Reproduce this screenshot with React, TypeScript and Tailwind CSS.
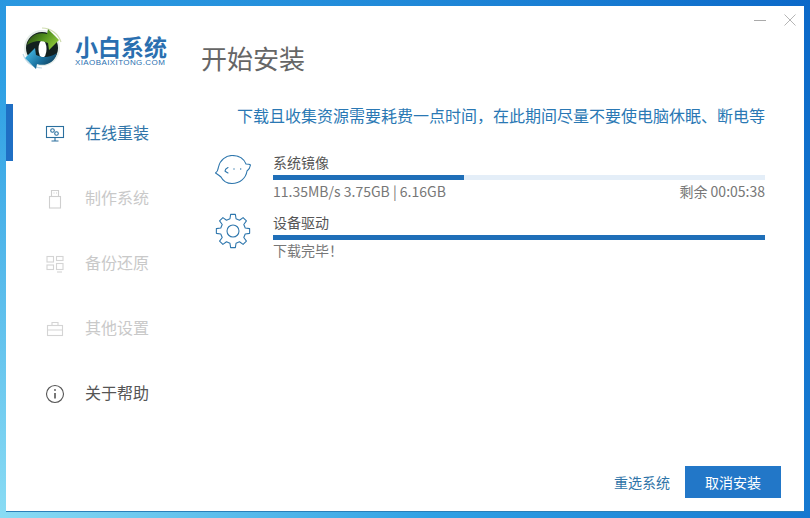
import React from 'react';

const Logo = () => (
  <svg width="44" height="46" viewBox="0 0 44 46">
    <defs>
      <linearGradient id="top" x1="0" y1="0" x2="1" y2="0.6">
        <stop offset="0" stopColor="#1c3012" />
        <stop offset="0.55" stopColor="#4f8f1c" />
        <stop offset="1" stopColor="#8cc63a" />
      </linearGradient>
      <linearGradient id="bottom" x1="0" y1="0" x2="1" y2="0.6">
        <stop offset="0" stopColor="#0c2a3c" />
        <stop offset="0.55" stopColor="#1a6f9c" />
        <stop offset="1" stopColor="#3fb0dc" />
      </linearGradient>
    </defs>
    <path d="M20 2 A20 20 0 0 1 39 16" fill="none" stroke="#cfdcb0" strokeWidth="1.2" />
    <path d="M1 28 A20 20 0 0 0 20 42" fill="none" stroke="#c4dbe6" strokeWidth="1.2" />
    <circle cx="20" cy="22" r="18" fill="#e4ece8" />
    <circle cx="20" cy="22" r="16" fill="#12201f" />
    <ellipse cx="20.5" cy="23" rx="4" ry="9" fill="#ffffff" />
    <path d="M5 19 C7 10 16 5 25 8 L26 3 L37 14 L27 24 L26 17 C20 14 12 14 5 19 Z" fill="url(#top)" />
    <path d="M5 19 C7 10 16 5 25 8 L26 3 L37 14 L27 24 L26 17 C20 14 12 14 5 19 Z" fill="url(#bottom)" transform="rotate(180 20 23)" />
  </svg>
);

const MonitorIcon = () => (
  <svg width="20" height="18" viewBox="0 0 20 18" fill="none" stroke="#2a6f9e" strokeWidth="1.1">
    <rect x="1.5" y="1.5" width="17" height="11" />
    <circle cx="7.5" cy="5.5" r="1.8" />
    <circle cx="11.5" cy="8.5" r="1.8" />
    <path d="M10 12.5V16M6.5 16h7" />
  </svg>
);

const UsbIcon = () => (
  <svg width="14" height="20" viewBox="0 0 14 20" fill="none" stroke="#cfcfcf" strokeWidth="1.1">
    <rect x="1.5" y="7.5" width="11" height="11.5" />
    <path d="M3.5 7.5V1.5h7v6M5.5 4h1M8 4h1" />
  </svg>
);

const BackupIcon = () => (
  <svg width="18" height="18" viewBox="0 0 18 18" fill="none" stroke="#d4d4d4" strokeWidth="1.1">
    <rect x="1" y="1.5" width="6.5" height="5.5" />
    <rect x="10.5" y="1.5" width="6.5" height="4" />
    <rect x="1" y="10" width="6.5" height="4.5" />
    <rect x="10.5" y="8.5" width="6.5" height="6" />
    <path d="M11 17h5" />
  </svg>
);

const CaseIcon = () => (
  <svg width="18" height="16" viewBox="0 0 18 16" fill="none" stroke="#d4d4d4" strokeWidth="1.1">
    <rect x="1.5" y="4.5" width="15" height="10" />
    <path d="M6 4.5V1.5h6v3M1.5 9h15" />
  </svg>
);

const InfoIcon = () => (
  <svg width="20" height="20" viewBox="0 0 20 20" fill="none" stroke="#555555" strokeWidth="1.1">
    <circle cx="10" cy="10" r="8.5" />
    <path d="M10 9v5.5" strokeWidth="1.6" />
    <circle cx="10" cy="6" r="0.9" fill="#555555" stroke="none" />
  </svg>
);

const ChatIcon = () => (
  <svg width="37" height="30" viewBox="0 0 37 30" fill="none" stroke="#2f77ad" strokeWidth="1.1">
    <path d="M3.5 12 C5 5 11 0.5 17 0.5 C24 0.5 29 4 31 9 C33 9 34.5 9 35.5 10 C35 13 33.5 15 32 16 C31 23 25 28.5 17 28.5 C12 28.5 8 26 6 22 C4 20 2 19 0.5 18 C2 17 3 15 3.5 12 Z" />
    <path d="M13 12.5 C11 13.5 10 15 10 16 C11 17 12 17.5 13 18" strokeLinecap="round" />
    <circle cx="19" cy="14" r="0.7" fill="#2f77ad" stroke="none" />
    <circle cx="25.7" cy="14" r="0.7" fill="#2f77ad" stroke="none" />
  </svg>
);

// 8 tooth gear outline around the middle of the 36x36 box
const gearPoints = () => {
  const pts: string[] = [];
  for (let i = 0; i < 8; i++) {
    const a = (i * Math.PI) / 4 - Math.PI / 2;
    const step = Math.PI / 8;
    const list: [number, number][] = [
      [12.6, a - step * 0.62],
      [16.8, a - step * 0.36],
      [16.8, a + step * 0.36],
      [12.6, a + step * 0.62],
    ];
    list.forEach(([r, t]) => pts.push(`${(18 + r * Math.cos(t)).toFixed(2)},${(18 + r * Math.sin(t)).toFixed(2)}`));
  }
  return pts.join(' ');
};

const GearIcon = () => (
  <svg width="36" height="36" viewBox="0 0 36 36" fill="none" stroke="#2f77ad" strokeWidth="1.1">
    <polygon points={gearPoints()} strokeLinejoin="round" />
    <circle cx="18" cy="18" r="6" />
  </svg>
);

const menu = [
  { icon: MonitorIcon, label: '在线重装', color: 'text-[#2f74a8]', active: true },
  { icon: UsbIcon, label: '制作系统', color: 'text-[#c9c9c9]', active: false },
  { icon: BackupIcon, label: '备份还原', color: 'text-[#c9c9c9]', active: false },
  { icon: CaseIcon, label: '其他设置', color: 'text-[#c9c9c9]', active: false },
  { icon: InfoIcon, label: '关于帮助', color: 'text-[#555555]', active: false },
];

const App: React.FC = () => {
  return (
    <div
      className="w-[810px] h-[518px] p-[6px] overflow-hidden bg-[radial-gradient(circle_at_0%_100%,#8adcf4_0%,#2fa0e4_45%,#0b68c8_100%)]"
      style={{ fontFamily: '"Noto Sans CJK SC", "Noto Sans", sans-serif' }}
    >
      <div className="relative w-full h-full bg-white flex flex-col border-b border-[#2a7fb8]">
        {/* window buttons */}
        <div className="absolute top-[8px] right-[8px] flex items-center gap-[18px]">
          <div className="w-[12px] h-px bg-[#aaaaaa]" />
          <svg width="12" height="12" viewBox="0 0 12 12" stroke="#b5b5b5" strokeWidth="1">
            <path d="M0.5 0.5l11 11M11.5 0.5l-11 11" />
          </svg>
        </div>

        {/* header */}
        <div className="h-[95px] flex items-start shrink-0">
          <div className="w-[195px] pl-[16px] pt-[20px] flex items-start">
            <Logo />
            <div className="ml-[9px] mt-[8px] flex flex-col">
              <span className="text-[23px] leading-[24px] font-bold text-[#2a6fb0] whitespace-nowrap">小白系统</span>
              <span className="text-[8px] leading-[10px] text-[#2a6fb0] tracking-[0.4px] whitespace-nowrap" style={{ fontFamily: '"Liberation Sans", sans-serif' }}>XIAOBAIXITONG.COM</span>
            </div>
          </div>
          <h1 className="text-[26px] leading-[30px] mt-[37px] font-normal text-[#666666]">开始安装</h1>
        </div>

        <div className="flex-1 flex min-h-0">
          {/* sidebar */}
          <div className="w-[196px] shrink-0 flex flex-col">
            {menu.map((item) => (
              <div key={item.label} className="relative h-[65px] flex items-center">
                {item.active && <div className="absolute left-0 top-[3px] h-[57px] w-[7px] bg-[#1f6fc4]" />}
                <div className="w-[79px] pl-[29px] pr-[10px] flex justify-center">
                  <item.icon />
                </div>
                <span className={`text-[16px] mb-[4px] ${item.color}`}>{item.label}</span>
              </div>
            ))}
          </div>

          {/* main */}
          <div className="flex-1 flex flex-col pr-[23px] pb-[13px] min-w-0">
            <div className="flex-1 pr-[16px] pl-[13px]">
              <p className="text-[16px] leading-[22px] mt-[3px] text-right text-[#2a78b4] whitespace-nowrap">下载且收集资源需要耗费一点时间，在此期间尽量不要使电脑休眠、断电等</p>

              <div className="flex mt-[28px]">
                <div className="w-[58px] shrink-0 pt-[1px]"><ChatIcon /></div>
                <div className="flex-1">
                  <div className="text-[14px] leading-[16px] text-[#555555]">系统镜像</div>
                  <div className="h-[5px] mt-[5px] bg-[#e4eef8]">
                    <div className="h-full bg-[#1f6fb8]" style={{ width: '38.8%' }} />
                  </div>
                  <div className="flex justify-between text-[14px] leading-[18px] mt-[2px] text-[#777777]">
                    <span>11.35MB/s 3.75GB | 6.16GB</span>
                    <span>剩余 00:05:38</span>
                  </div>
                </div>
              </div>

              <div className="flex mt-[15px]">
                <div className="w-[58px] shrink-0 -mt-[2px]"><GearIcon /></div>
                <div className="flex-1">
                  <div className="text-[14px] leading-[14px] text-[#555555]">设备驱动</div>
                  <div className="h-[5px] mt-[6px] bg-[#1f6fb8]" />
                  <div className="text-[14px] leading-[18px] mt-[1px] text-[#777777]">下载完毕！</div>
                </div>
              </div>
            </div>

            <div className="flex justify-end items-center gap-[15px]">
              <span className="text-[14px] text-[#2f74a8]">重选系统</span>
              <button className="w-[96px] h-[32px] bg-[#2277c8] text-white text-[14px]">取消安装</button>
            </div>
          </div>
        </div>
      </div>
    </div>
  );
};

export default App;
